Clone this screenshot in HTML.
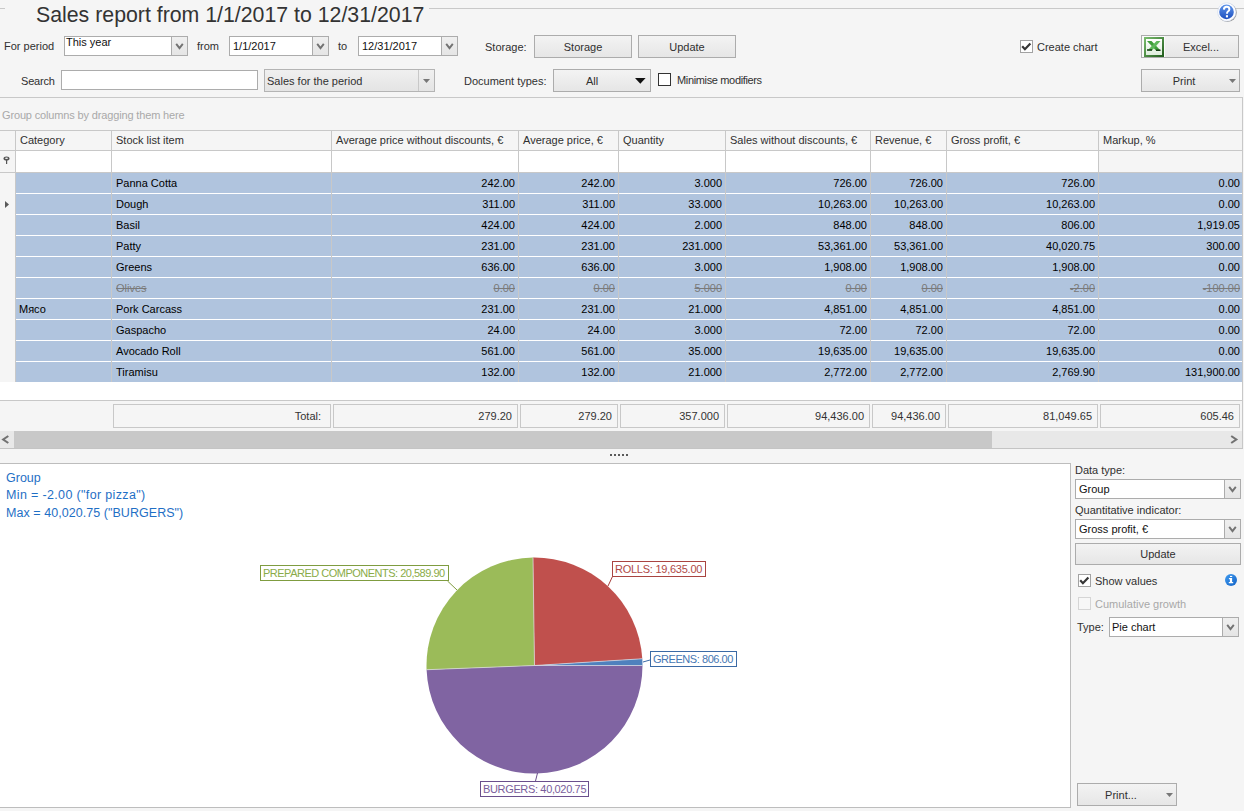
<!DOCTYPE html>
<html><head><meta charset="utf-8"><style>
html,body{margin:0;padding:0;}
body{width:1244px;height:811px;overflow:hidden;background:#f5f5f5;position:relative;font-family:"Liberation Sans",sans-serif;}
body>div{position:absolute;white-space:nowrap;}
svg{display:block;}
</style></head><body>
<div style="left:36px;top:5px;font-size:21.3px;line-height:21.3px;color:#333;">Sales report from 1/1/2017 to 12/31/2017</div>
<div style="left:429px;top:8px;width:815px;height:1px;background:#c9c9c9;"></div>
<div style="left:0px;top:8px;width:5px;height:1px;background:#c9c9c9;"></div>
<div style="left:1216px;top:1px;width:22px;height:22px;"><svg width="22" height="22" viewBox="0 0 22 22"><defs><linearGradient id="hg" x1="0" y1="0" x2="0" y2="1"><stop offset="0" stop-color="#5f95ea"/><stop offset="1" stop-color="#1d4fbf"/></linearGradient></defs><circle cx="11.4" cy="11.6" r="9.4" fill="#4a4a4a" opacity="0.55"/><circle cx="10.8" cy="11" r="9.2" fill="#fdfdff" stroke="#c5d3ea" stroke-width="0.5"/><circle cx="10.5" cy="10.9" r="7.3" fill="url(#hg)"/><path d="M7.9 8.6 Q8 5.8 10.7 5.8 Q13.4 5.8 13.4 8.2 Q13.4 9.6 11.9 10.5 Q11 11.1 11 12.7" fill="none" stroke="#fff" stroke-width="2"/><rect x="9.9" y="14.2" width="2.1" height="2.2" fill="#fff"/></svg></div>
<div style="left:4px;top:41px;font-size:11px;line-height:11px;color:#303030;">For period</div>
<div style="left:64px;top:36px;width:122px;height:18px;border:1px solid #acacac;background:#fff;"></div>
<div style="left:171px;top:37px;width:16px;height:18px;background:linear-gradient(#efefef,#e5e5e5);border-left:1px solid #acacac;box-sizing:border-box;"></div>
<div style="left:174.5px;top:43.0px;width:9px;height:7px;"><svg width="9" height="7" viewBox="0 0 9 7"><path d="M1.2 0.9 L4.5 5.2 L7.8 0.9" fill="none" stroke="#727272" stroke-width="1.9"/></svg></div>
<div style="left:66px;top:37px;font-size:11px;line-height:11px;color:#111;">This year</div>
<div style="left:197px;top:41px;font-size:11px;line-height:11px;color:#303030;">from</div>
<div style="left:229px;top:36px;width:98px;height:18px;border:1px solid #acacac;background:#fff;"></div>
<div style="left:312px;top:37px;width:16px;height:18px;background:linear-gradient(#efefef,#e5e5e5);border-left:1px solid #acacac;box-sizing:border-box;"></div>
<div style="left:315.5px;top:43.0px;width:9px;height:7px;"><svg width="9" height="7" viewBox="0 0 9 7"><path d="M1.2 0.9 L4.5 5.2 L7.8 0.9" fill="none" stroke="#727272" stroke-width="1.9"/></svg></div>
<div style="left:233px;top:41px;font-size:11px;line-height:11px;color:#111;">1/1/2017</div>
<div style="left:338px;top:41px;font-size:11px;line-height:11px;color:#303030;">to</div>
<div style="left:358px;top:36px;width:98px;height:18px;border:1px solid #acacac;background:#fff;"></div>
<div style="left:441px;top:37px;width:16px;height:18px;background:linear-gradient(#efefef,#e5e5e5);border-left:1px solid #acacac;box-sizing:border-box;"></div>
<div style="left:444.5px;top:43.0px;width:9px;height:7px;"><svg width="9" height="7" viewBox="0 0 9 7"><path d="M1.2 0.9 L4.5 5.2 L7.8 0.9" fill="none" stroke="#727272" stroke-width="1.9"/></svg></div>
<div style="left:362px;top:41px;font-size:11px;line-height:11px;color:#111;">12/31/2017</div>
<div style="left:485px;top:42px;font-size:11px;line-height:11px;color:#303030;">Storage:</div>
<div style="left:534px;top:35px;width:96px;height:21px;border:1px solid #acacac;background:linear-gradient(#f3f3f3,#e6e6e6);"></div>
<div style="left:523.0px;top:42px;width:120px;text-align:center;font-size:11px;line-height:11px;color:#303030;">Storage</div>
<div style="left:638px;top:35px;width:96px;height:21px;border:1px solid #acacac;background:linear-gradient(#f3f3f3,#e6e6e6);"></div>
<div style="left:627.0px;top:42px;width:120px;text-align:center;font-size:11px;line-height:11px;color:#303030;">Update</div>
<div style="left:1020px;top:40px;width:11px;height:11px;border:1px solid #a2a2a2;background:#fff;"></div>
<div style="left:1020px;top:40px;width:13px;height:13px;"><svg width="13" height="13" viewBox="0 0 13 13"><path d="M2.2 6.3 L4.9 9.2 L10.4 3.4" fill="none" stroke="#363636" stroke-width="2.2"/></svg></div>
<div style="left:1037px;top:42px;font-size:11px;line-height:11px;color:#303030;">Create chart</div>
<div style="left:1141px;top:35px;width:96px;height:21px;border:1px solid #acacac;background:linear-gradient(#f3f3f3,#e6e6e6);"></div>
<div style="left:1141px;top:42px;width:120px;text-align:center;font-size:11px;line-height:11px;color:#303030;">Excel...</div>
<div style="left:1142px;top:36px;width:23px;height:21px;background:#fbfbfb;"></div>
<div style="left:1144px;top:37px;width:20px;height:20px;"><svg width="20" height="20" viewBox="0 0 20 20"><defs><linearGradient id="eg" x1="0" y1="0" x2="1" y2="1"><stop offset="0" stop-color="#7cc070"/><stop offset="1" stop-color="#1f5a1a"/></linearGradient><linearGradient id="ei" x1="0" y1="0" x2="0" y2="1"><stop offset="0" stop-color="#ffffff"/><stop offset="1" stop-color="#dfeedd"/></linearGradient></defs><rect x="0" y="0" width="20" height="20" fill="url(#eg)"/><rect x="2" y="2" width="16" height="16" fill="url(#ei)"/><path d="M3 4 H7.5 L16.5 13.5 H12 Z" fill="#3e9e3a"/><path d="M12.5 4 H16.5 L8 13.5 H3.5 Z" fill="#5db85a"/><path d="M3 13 H8 M12 13.2 H16.5" stroke="#143d12" stroke-width="1.6"/></svg></div>
<div style="left:21px;top:76px;font-size:11px;line-height:11px;color:#303030;letter-spacing:-0.2px;">Search</div>
<div style="left:61px;top:70px;width:195px;height:18px;border:1px solid #acacac;background:#fff;"></div>
<div style="left:264px;top:69px;width:169px;height:21px;border:1px solid #b4b4b4;background:linear-gradient(#f0f0f0,#e4e4e4);"></div>
<div style="left:418px;top:70px;width:1px;height:21px;background:#c8c8c8;"></div>
<div style="left:423px;top:79px;width:7px;height:4px;"><svg width="7" height="4"><path d="M0 0 H7 L3.5 4 Z" fill="#777"/></svg></div>
<div style="left:267px;top:76px;font-size:11px;line-height:11px;color:#303030;">Sales for the period</div>
<div style="left:464px;top:76px;font-size:11px;line-height:11px;color:#303030;">Document types:</div>
<div style="left:553px;top:69px;width:96px;height:21px;border:1px solid #acacac;background:linear-gradient(#f3f3f3,#e6e6e6);"></div>
<div style="left:572px;top:76px;width:40px;text-align:center;font-size:11px;line-height:11px;color:#303030;">All</div>
<div style="left:634.5px;top:77.5px;width:11px;height:6px;"><svg width="11" height="6"><path d="M0 0 H10.6 L5.3 5.8 Z" fill="#111"/></svg></div>
<div style="left:658px;top:73px;width:11px;height:11px;border:1px solid #333;background:#fff;"></div>
<div style="left:677px;top:75px;font-size:11px;line-height:11px;color:#303030;letter-spacing:-0.35px;">Minimise modifiers</div>
<div style="left:1141px;top:69px;width:97px;height:21px;border:1px solid #acacac;background:linear-gradient(#f3f3f3,#e6e6e6);"></div>
<div style="left:1124px;top:76px;width:120px;text-align:center;font-size:11px;line-height:11px;color:#303030;">Print</div>
<div style="left:1229px;top:79px;width:7px;height:4px;"><svg width="7" height="4"><path d="M0 0 H7 L3.5 4 Z" fill="#777"/></svg></div>
<div style="left:0px;top:97px;width:1242px;height:1px;background:#c8c8c8;"></div>
<div style="left:1242px;top:97px;width:1px;height:352px;background:#c8c8c8;"></div>
<div style="left:2px;top:110px;font-size:11px;line-height:11px;color:#a9a9a9;letter-spacing:-0.15px;">Group columns by dragging them here</div>
<div style="left:0px;top:130px;width:1242px;height:1px;background:#c8c8c8;"></div>
<div style="left:0px;top:150px;width:1242px;height:1px;background:#c8c8c8;"></div>
<div style="left:15px;top:151px;width:1083px;height:21px;background:#fff;"></div>
<div style="left:0px;top:172px;width:1242px;height:1px;background:#c8c8c8;"></div>
<div style="left:20px;top:135px;font-size:11px;line-height:11px;color:#303030;">Category</div>
<div style="left:116px;top:135px;font-size:11px;line-height:11px;color:#303030;">Stock list item</div>
<div style="left:336px;top:135px;font-size:11px;line-height:11px;color:#303030;">Average price without discounts, €</div>
<div style="left:523px;top:135px;font-size:11px;line-height:11px;color:#303030;">Average price, €</div>
<div style="left:623px;top:135px;font-size:11px;line-height:11px;color:#303030;">Quantity</div>
<div style="left:730px;top:135px;font-size:11px;line-height:11px;color:#303030;">Sales without discounts, €</div>
<div style="left:875px;top:135px;font-size:11px;line-height:11px;color:#303030;">Revenue, €</div>
<div style="left:951px;top:135px;font-size:11px;line-height:11px;color:#303030;">Gross profit, €</div>
<div style="left:1103px;top:135px;font-size:11px;line-height:11px;color:#303030;">Markup, %</div>
<div style="left:15px;top:173px;width:1227px;height:20px;background:#b0c4de;"></div>
<div style="left:15px;top:193px;width:1227px;height:1px;background:#fff;"></div>
<div style="left:116px;top:178px;font-size:11px;line-height:11px;color:#000;">Panna Cotta</div>
<div style="left:365px;top:178px;width:150px;text-align:right;font-size:11px;line-height:11px;color:#000;">242.00</div>
<div style="left:465px;top:178px;width:150px;text-align:right;font-size:11px;line-height:11px;color:#000;">242.00</div>
<div style="left:572px;top:178px;width:150px;text-align:right;font-size:11px;line-height:11px;color:#000;">3.000</div>
<div style="left:717px;top:178px;width:150px;text-align:right;font-size:11px;line-height:11px;color:#000;">726.00</div>
<div style="left:793px;top:178px;width:150px;text-align:right;font-size:11px;line-height:11px;color:#000;">726.00</div>
<div style="left:945px;top:178px;width:150px;text-align:right;font-size:11px;line-height:11px;color:#000;">726.00</div>
<div style="left:1090px;top:178px;width:150px;text-align:right;font-size:11px;line-height:11px;color:#000;">0.00</div>
<div style="left:15px;top:194px;width:1227px;height:20px;background:#b0c4de;"></div>
<div style="left:15px;top:214px;width:1227px;height:1px;background:#fff;"></div>
<div style="left:116px;top:199px;font-size:11px;line-height:11px;color:#000;">Dough</div>
<div style="left:365px;top:199px;width:150px;text-align:right;font-size:11px;line-height:11px;color:#000;">311.00</div>
<div style="left:465px;top:199px;width:150px;text-align:right;font-size:11px;line-height:11px;color:#000;">311.00</div>
<div style="left:572px;top:199px;width:150px;text-align:right;font-size:11px;line-height:11px;color:#000;">33.000</div>
<div style="left:717px;top:199px;width:150px;text-align:right;font-size:11px;line-height:11px;color:#000;">10,263.00</div>
<div style="left:793px;top:199px;width:150px;text-align:right;font-size:11px;line-height:11px;color:#000;">10,263.00</div>
<div style="left:945px;top:199px;width:150px;text-align:right;font-size:11px;line-height:11px;color:#000;">10,263.00</div>
<div style="left:1090px;top:199px;width:150px;text-align:right;font-size:11px;line-height:11px;color:#000;">0.00</div>
<div style="left:15px;top:215px;width:1227px;height:20px;background:#b0c4de;"></div>
<div style="left:15px;top:235px;width:1227px;height:1px;background:#fff;"></div>
<div style="left:116px;top:220px;font-size:11px;line-height:11px;color:#000;">Basil</div>
<div style="left:365px;top:220px;width:150px;text-align:right;font-size:11px;line-height:11px;color:#000;">424.00</div>
<div style="left:465px;top:220px;width:150px;text-align:right;font-size:11px;line-height:11px;color:#000;">424.00</div>
<div style="left:572px;top:220px;width:150px;text-align:right;font-size:11px;line-height:11px;color:#000;">2.000</div>
<div style="left:717px;top:220px;width:150px;text-align:right;font-size:11px;line-height:11px;color:#000;">848.00</div>
<div style="left:793px;top:220px;width:150px;text-align:right;font-size:11px;line-height:11px;color:#000;">848.00</div>
<div style="left:945px;top:220px;width:150px;text-align:right;font-size:11px;line-height:11px;color:#000;">806.00</div>
<div style="left:1090px;top:220px;width:150px;text-align:right;font-size:11px;line-height:11px;color:#000;">1,919.05</div>
<div style="left:15px;top:236px;width:1227px;height:20px;background:#b0c4de;"></div>
<div style="left:15px;top:256px;width:1227px;height:1px;background:#fff;"></div>
<div style="left:116px;top:241px;font-size:11px;line-height:11px;color:#000;">Patty</div>
<div style="left:365px;top:241px;width:150px;text-align:right;font-size:11px;line-height:11px;color:#000;">231.00</div>
<div style="left:465px;top:241px;width:150px;text-align:right;font-size:11px;line-height:11px;color:#000;">231.00</div>
<div style="left:572px;top:241px;width:150px;text-align:right;font-size:11px;line-height:11px;color:#000;">231.000</div>
<div style="left:717px;top:241px;width:150px;text-align:right;font-size:11px;line-height:11px;color:#000;">53,361.00</div>
<div style="left:793px;top:241px;width:150px;text-align:right;font-size:11px;line-height:11px;color:#000;">53,361.00</div>
<div style="left:945px;top:241px;width:150px;text-align:right;font-size:11px;line-height:11px;color:#000;">40,020.75</div>
<div style="left:1090px;top:241px;width:150px;text-align:right;font-size:11px;line-height:11px;color:#000;">300.00</div>
<div style="left:15px;top:257px;width:1227px;height:20px;background:#b0c4de;"></div>
<div style="left:15px;top:277px;width:1227px;height:1px;background:#fff;"></div>
<div style="left:116px;top:262px;font-size:11px;line-height:11px;color:#000;">Greens</div>
<div style="left:365px;top:262px;width:150px;text-align:right;font-size:11px;line-height:11px;color:#000;">636.00</div>
<div style="left:465px;top:262px;width:150px;text-align:right;font-size:11px;line-height:11px;color:#000;">636.00</div>
<div style="left:572px;top:262px;width:150px;text-align:right;font-size:11px;line-height:11px;color:#000;">3.000</div>
<div style="left:717px;top:262px;width:150px;text-align:right;font-size:11px;line-height:11px;color:#000;">1,908.00</div>
<div style="left:793px;top:262px;width:150px;text-align:right;font-size:11px;line-height:11px;color:#000;">1,908.00</div>
<div style="left:945px;top:262px;width:150px;text-align:right;font-size:11px;line-height:11px;color:#000;">1,908.00</div>
<div style="left:1090px;top:262px;width:150px;text-align:right;font-size:11px;line-height:11px;color:#000;">0.00</div>
<div style="left:15px;top:278px;width:1227px;height:20px;background:#b0c4de;"></div>
<div style="left:15px;top:298px;width:1227px;height:1px;background:#fff;"></div>
<div style="left:116px;top:283px;font-size:11px;line-height:11px;color:#7a7a7a;text-decoration:line-through;">Olives</div>
<div style="left:365px;top:283px;width:150px;text-align:right;font-size:11px;line-height:11px;color:#7a7a7a;text-decoration:line-through;">0.00</div>
<div style="left:465px;top:283px;width:150px;text-align:right;font-size:11px;line-height:11px;color:#7a7a7a;text-decoration:line-through;">0.00</div>
<div style="left:572px;top:283px;width:150px;text-align:right;font-size:11px;line-height:11px;color:#7a7a7a;text-decoration:line-through;">5.000</div>
<div style="left:717px;top:283px;width:150px;text-align:right;font-size:11px;line-height:11px;color:#7a7a7a;text-decoration:line-through;">0.00</div>
<div style="left:793px;top:283px;width:150px;text-align:right;font-size:11px;line-height:11px;color:#7a7a7a;text-decoration:line-through;">0.00</div>
<div style="left:945px;top:283px;width:150px;text-align:right;font-size:11px;line-height:11px;color:#7a7a7a;text-decoration:line-through;">-2.00</div>
<div style="left:1090px;top:283px;width:150px;text-align:right;font-size:11px;line-height:11px;color:#7a7a7a;text-decoration:line-through;">-100.00</div>
<div style="left:15px;top:299px;width:1227px;height:20px;background:#b0c4de;"></div>
<div style="left:15px;top:319px;width:1227px;height:1px;background:#fff;"></div>
<div style="left:19px;top:304px;font-size:11px;line-height:11px;color:#000;">Мясо</div>
<div style="left:116px;top:304px;font-size:11px;line-height:11px;color:#000;">Pork Carcass</div>
<div style="left:365px;top:304px;width:150px;text-align:right;font-size:11px;line-height:11px;color:#000;">231.00</div>
<div style="left:465px;top:304px;width:150px;text-align:right;font-size:11px;line-height:11px;color:#000;">231.00</div>
<div style="left:572px;top:304px;width:150px;text-align:right;font-size:11px;line-height:11px;color:#000;">21.000</div>
<div style="left:717px;top:304px;width:150px;text-align:right;font-size:11px;line-height:11px;color:#000;">4,851.00</div>
<div style="left:793px;top:304px;width:150px;text-align:right;font-size:11px;line-height:11px;color:#000;">4,851.00</div>
<div style="left:945px;top:304px;width:150px;text-align:right;font-size:11px;line-height:11px;color:#000;">4,851.00</div>
<div style="left:1090px;top:304px;width:150px;text-align:right;font-size:11px;line-height:11px;color:#000;">0.00</div>
<div style="left:15px;top:320px;width:1227px;height:20px;background:#b0c4de;"></div>
<div style="left:15px;top:340px;width:1227px;height:1px;background:#fff;"></div>
<div style="left:116px;top:325px;font-size:11px;line-height:11px;color:#000;">Gaspacho</div>
<div style="left:365px;top:325px;width:150px;text-align:right;font-size:11px;line-height:11px;color:#000;">24.00</div>
<div style="left:465px;top:325px;width:150px;text-align:right;font-size:11px;line-height:11px;color:#000;">24.00</div>
<div style="left:572px;top:325px;width:150px;text-align:right;font-size:11px;line-height:11px;color:#000;">3.000</div>
<div style="left:717px;top:325px;width:150px;text-align:right;font-size:11px;line-height:11px;color:#000;">72.00</div>
<div style="left:793px;top:325px;width:150px;text-align:right;font-size:11px;line-height:11px;color:#000;">72.00</div>
<div style="left:945px;top:325px;width:150px;text-align:right;font-size:11px;line-height:11px;color:#000;">72.00</div>
<div style="left:1090px;top:325px;width:150px;text-align:right;font-size:11px;line-height:11px;color:#000;">0.00</div>
<div style="left:15px;top:341px;width:1227px;height:20px;background:#b0c4de;"></div>
<div style="left:15px;top:361px;width:1227px;height:1px;background:#fff;"></div>
<div style="left:116px;top:346px;font-size:11px;line-height:11px;color:#000;">Avocado Roll</div>
<div style="left:365px;top:346px;width:150px;text-align:right;font-size:11px;line-height:11px;color:#000;">561.00</div>
<div style="left:465px;top:346px;width:150px;text-align:right;font-size:11px;line-height:11px;color:#000;">561.00</div>
<div style="left:572px;top:346px;width:150px;text-align:right;font-size:11px;line-height:11px;color:#000;">35.000</div>
<div style="left:717px;top:346px;width:150px;text-align:right;font-size:11px;line-height:11px;color:#000;">19,635.00</div>
<div style="left:793px;top:346px;width:150px;text-align:right;font-size:11px;line-height:11px;color:#000;">19,635.00</div>
<div style="left:945px;top:346px;width:150px;text-align:right;font-size:11px;line-height:11px;color:#000;">19,635.00</div>
<div style="left:1090px;top:346px;width:150px;text-align:right;font-size:11px;line-height:11px;color:#000;">0.00</div>
<div style="left:15px;top:362px;width:1227px;height:20px;background:#b0c4de;"></div>
<div style="left:15px;top:382px;width:1227px;height:1px;background:#fff;"></div>
<div style="left:116px;top:367px;font-size:11px;line-height:11px;color:#000;">Tiramisu</div>
<div style="left:365px;top:367px;width:150px;text-align:right;font-size:11px;line-height:11px;color:#000;">132.00</div>
<div style="left:465px;top:367px;width:150px;text-align:right;font-size:11px;line-height:11px;color:#000;">132.00</div>
<div style="left:572px;top:367px;width:150px;text-align:right;font-size:11px;line-height:11px;color:#000;">21.000</div>
<div style="left:717px;top:367px;width:150px;text-align:right;font-size:11px;line-height:11px;color:#000;">2,772.00</div>
<div style="left:793px;top:367px;width:150px;text-align:right;font-size:11px;line-height:11px;color:#000;">2,772.00</div>
<div style="left:945px;top:367px;width:150px;text-align:right;font-size:11px;line-height:11px;color:#000;">2,769.90</div>
<div style="left:1090px;top:367px;width:150px;text-align:right;font-size:11px;line-height:11px;color:#000;">131,900.00</div>
<div style="left:0px;top:382px;width:1242px;height:18px;background:#fff;"></div>
<div style="left:15px;top:131px;width:1px;height:251px;background:#c8c8c8;"></div>
<div style="left:111px;top:131px;width:1px;height:251px;background:#c8c8c8;"></div>
<div style="left:331px;top:131px;width:1px;height:251px;background:#c8c8c8;"></div>
<div style="left:518px;top:131px;width:1px;height:251px;background:#c8c8c8;"></div>
<div style="left:618px;top:131px;width:1px;height:251px;background:#c8c8c8;"></div>
<div style="left:725px;top:131px;width:1px;height:251px;background:#c8c8c8;"></div>
<div style="left:870px;top:131px;width:1px;height:251px;background:#c8c8c8;"></div>
<div style="left:946px;top:131px;width:1px;height:251px;background:#c8c8c8;"></div>
<div style="left:1098px;top:131px;width:1px;height:251px;background:#c8c8c8;"></div>
<div style="left:3px;top:156px;width:7px;height:9px;"><svg width="7" height="9" viewBox="0 0 7 9"><ellipse cx="3.5" cy="2.5" rx="3" ry="2" fill="#555"/><ellipse cx="3.5" cy="2.3" rx="1.5" ry="0.8" fill="#eee"/><rect x="3" y="4" width="1.2" height="4" fill="#555"/></svg></div>
<div style="left:5px;top:201px;width:4px;height:7px;"><svg width="4" height="7"><path d="M0 0 L4 3.5 L0 7 Z" fill="#5a5a5a"/></svg></div>
<div style="left:0px;top:400px;width:1242px;height:1px;background:#c8c8c8;"></div>
<div style="left:113px;top:404px;width:216px;height:22px;border:1px solid #c8c8c8;"></div>
<div style="left:171px;top:411px;width:150px;text-align:right;font-size:11px;line-height:11px;color:#333;">Total:</div>
<div style="left:333px;top:404px;width:183px;height:22px;border:1px solid #c8c8c8;"></div>
<div style="left:362px;top:411px;width:150px;text-align:right;font-size:11px;line-height:11px;color:#333;">279.20</div>
<div style="left:520px;top:404px;width:96px;height:22px;border:1px solid #c8c8c8;"></div>
<div style="left:462px;top:411px;width:150px;text-align:right;font-size:11px;line-height:11px;color:#333;">279.20</div>
<div style="left:620px;top:404px;width:103px;height:22px;border:1px solid #c8c8c8;"></div>
<div style="left:569px;top:411px;width:150px;text-align:right;font-size:11px;line-height:11px;color:#333;">357.000</div>
<div style="left:727px;top:404px;width:141px;height:22px;border:1px solid #c8c8c8;"></div>
<div style="left:714px;top:411px;width:150px;text-align:right;font-size:11px;line-height:11px;color:#333;">94,436.00</div>
<div style="left:872px;top:404px;width:72px;height:22px;border:1px solid #c8c8c8;"></div>
<div style="left:790px;top:411px;width:150px;text-align:right;font-size:11px;line-height:11px;color:#333;">94,436.00</div>
<div style="left:948px;top:404px;width:148px;height:22px;border:1px solid #c8c8c8;"></div>
<div style="left:942px;top:411px;width:150px;text-align:right;font-size:11px;line-height:11px;color:#333;">81,049.65</div>
<div style="left:1100px;top:404px;width:138px;height:22px;border:1px solid #c8c8c8;"></div>
<div style="left:1084px;top:411px;width:150px;text-align:right;font-size:11px;line-height:11px;color:#333;">605.46</div>
<div style="left:0px;top:431px;width:1242px;height:17px;background:#e8e8e8;"></div>
<div style="left:14px;top:431px;width:978px;height:17px;background:#c8c8c8;"></div>
<div style="left:1px;top:435px;width:9px;height:9px;"><svg width="9" height="9"><path d="M7.3 1 L2.2 4.5 L7.3 8" fill="none" stroke="#727272" stroke-width="2.1"/></svg></div>
<div style="left:1230px;top:435px;width:9px;height:9px;"><svg width="9" height="9"><path d="M1.2 1 L6.3 4.5 L1.2 8" fill="none" stroke="#727272" stroke-width="2.1"/></svg></div>
<div style="left:0px;top:448px;width:1243px;height:1px;background:#c4c4c4;"></div>
<div style="left:610px;top:454px;width:2px;height:2px;background:#5a5a5a;"></div>
<div style="left:614px;top:454px;width:2px;height:2px;background:#5a5a5a;"></div>
<div style="left:618px;top:454px;width:2px;height:2px;background:#5a5a5a;"></div>
<div style="left:622px;top:454px;width:2px;height:2px;background:#5a5a5a;"></div>
<div style="left:626px;top:454px;width:2px;height:2px;background:#5a5a5a;"></div>
<div style="left:0px;top:463px;width:1071px;height:345px;border-top:1px solid #bdbdbd;border-right:1px solid #bdbdbd;border-bottom:1px solid #bdbdbd;background:#fff;box-sizing:border-box;"></div>
<div style="left:6px;top:472px;font-size:12.5px;line-height:12.5px;color:#1f6fc5;">Group</div>
<div style="left:6px;top:489px;font-size:12.5px;line-height:12.5px;color:#1f6fc5;letter-spacing:0.35px;">Min = -2.00 ("for pizza")</div>
<div style="left:6px;top:507px;font-size:12.5px;line-height:12.5px;color:#1f6fc5;letter-spacing:0.05px;">Max = 40,020.75 ("BURGERS")</div>
<svg width="1244" height="811" style="position:absolute;left:0;top:0"><path d="M534.5 665.5 L642.50 665.50 A108 108 0 0 1 426.58 669.73 Z" fill="#8064a2"/><path d="M534.5 665.5 L426.58 669.73 A108 108 0 0 1 533.01 557.51 Z" fill="#9bbb59"/><path d="M534.5 665.5 L533.01 557.51 A108 108 0 0 1 642.29 658.76 Z" fill="#c0504d"/><path d="M534.5 665.5 L642.29 658.76 A108 108 0 0 1 642.50 665.50 Z" fill="#4f81bd"/><path d="M534.5 665.5 L642.50 665.50" stroke="#dcdce4" stroke-width="0.7"/><path d="M534.5 665.5 L426.58 669.73" stroke="#dcdce4" stroke-width="0.7"/><path d="M534.5 665.5 L533.01 557.51" stroke="#dcdce4" stroke-width="0.7"/><path d="M534.5 665.5 L642.29 658.76" stroke="#dcdce4" stroke-width="0.7"/><path d="M447.5 581 L457 590" stroke="#7f9c40" stroke-width="1" fill="none"/><path d="M612.5 576.5 L608 586" stroke="#a63d3a" stroke-width="1" fill="none"/><path d="M650 660 L643 662" stroke="#3b6aa5" stroke-width="1" fill="none"/><path d="M535.5 781 L537.5 773" stroke="#6a4f8c" stroke-width="1" fill="none"/></svg>
<div style="left:260px;top:565px;width:187px;height:14px;border:1px solid #7f9c40;background:#fff;"></div>
<div style="left:263px;top:568px;font-size:11px;line-height:11px;color:#8aab48;letter-spacing:-0.5px;">PREPARED COMPONENTS: 20,589.90</div>
<div style="left:612px;top:561px;width:92px;height:14px;border:1px solid #a94441;background:#fff;"></div>
<div style="left:615px;top:564px;font-size:11px;line-height:11px;color:#b04a47;letter-spacing:-0.25px;">ROLLS: 19,635.00</div>
<div style="left:650px;top:651px;width:85px;height:14px;border:1px solid #3b6aa5;background:#fff;"></div>
<div style="left:653px;top:654px;font-size:11px;line-height:11px;color:#4677b3;letter-spacing:-0.45px;">GREENS: 806.00</div>
<div style="left:480px;top:781px;width:107px;height:14px;border:1px solid #6a4f8c;background:#fff;"></div>
<div style="left:483px;top:784px;font-size:11px;line-height:11px;color:#7a5e9c;letter-spacing:-0.35px;">BURGERS: 40,020.75</div>
<div style="left:1075px;top:465px;font-size:11px;line-height:11px;color:#303030;">Data type:</div>
<div style="left:1075px;top:479px;width:164px;height:18px;border:1px solid #acacac;background:#fff;"></div>
<div style="left:1224px;top:480px;width:16px;height:18px;background:linear-gradient(#efefef,#e5e5e5);border-left:1px solid #acacac;box-sizing:border-box;"></div>
<div style="left:1227.5px;top:486.0px;width:9px;height:7px;"><svg width="9" height="7" viewBox="0 0 9 7"><path d="M1.2 0.9 L4.5 5.2 L7.8 0.9" fill="none" stroke="#727272" stroke-width="1.9"/></svg></div>
<div style="left:1079px;top:484px;font-size:11px;line-height:11px;color:#111;">Group</div>
<div style="left:1075px;top:505px;font-size:11px;line-height:11px;color:#303030;">Quantitative indicator:</div>
<div style="left:1075px;top:519px;width:164px;height:18px;border:1px solid #acacac;background:#fff;"></div>
<div style="left:1224px;top:520px;width:16px;height:18px;background:linear-gradient(#efefef,#e5e5e5);border-left:1px solid #acacac;box-sizing:border-box;"></div>
<div style="left:1227.5px;top:526.0px;width:9px;height:7px;"><svg width="9" height="7" viewBox="0 0 9 7"><path d="M1.2 0.9 L4.5 5.2 L7.8 0.9" fill="none" stroke="#727272" stroke-width="1.9"/></svg></div>
<div style="left:1079px;top:524px;font-size:11px;line-height:11px;color:#111;">Gross profit, €</div>
<div style="left:1075px;top:543px;width:164px;height:20px;border:1px solid #acacac;background:linear-gradient(#f3f3f3,#e6e6e6);"></div>
<div style="left:1098.0px;top:549px;width:120px;text-align:center;font-size:11px;line-height:11px;color:#303030;">Update</div>
<div style="left:1078px;top:574px;width:11px;height:11px;border:1px solid #a2a2a2;background:#fff;"></div>
<div style="left:1078px;top:574px;width:13px;height:13px;"><svg width="13" height="13" viewBox="0 0 13 13"><path d="M2.2 6.3 L4.9 9.2 L10.4 3.4" fill="none" stroke="#363636" stroke-width="2.2"/></svg></div>
<div style="left:1095px;top:576px;font-size:11px;line-height:11px;color:#303030;">Show values</div>
<div style="left:1224px;top:573px;width:14px;height:14px;"><svg width="14" height="14" viewBox="0 0 14 14"><defs><linearGradient id="ig" x1="0" y1="0" x2="1" y2="1"><stop offset="0" stop-color="#3f9bf0"/><stop offset="1" stop-color="#1463c6"/></linearGradient></defs><circle cx="7" cy="7" r="6" fill="url(#ig)"/><rect x="6" y="2.9" width="2.2" height="1.1" fill="#fff"/><path d="M4.9 5.1 H8.1 V9.1 H9.2 V10.3 H4.8 V9.1 H5.9 V6.2 H4.9 Z" fill="#fff"/></svg></div>
<div style="left:1078px;top:597px;width:11px;height:11px;border:1px solid #d5d5d5;background:#f7f7f7;"></div>
<div style="left:1095px;top:599px;font-size:11px;line-height:11px;color:#a8a8a8;">Cumulative growth</div>
<div style="left:1077px;top:622px;font-size:11px;line-height:11px;color:#303030;">Type:</div>
<div style="left:1109px;top:617px;width:128px;height:18px;border:1px solid #acacac;background:#fff;"></div>
<div style="left:1222px;top:618px;width:16px;height:18px;background:linear-gradient(#efefef,#e5e5e5);border-left:1px solid #acacac;box-sizing:border-box;"></div>
<div style="left:1225.5px;top:624.0px;width:9px;height:7px;"><svg width="9" height="7" viewBox="0 0 9 7"><path d="M1.2 0.9 L4.5 5.2 L7.8 0.9" fill="none" stroke="#727272" stroke-width="1.9"/></svg></div>
<div style="left:1112px;top:622px;font-size:11px;line-height:11px;color:#111;">Pie chart</div>
<div style="left:1077px;top:783px;width:98px;height:21px;border:1px solid #acacac;background:linear-gradient(#f3f3f3,#e6e6e6);"></div>
<div style="left:1061px;top:790px;width:120px;text-align:center;font-size:11px;line-height:11px;color:#303030;">Print...</div>
<div style="left:1166px;top:793px;width:7px;height:4px;"><svg width="7" height="4"><path d="M0 0 H7 L3.5 4 Z" fill="#777"/></svg></div>
</body></html>
